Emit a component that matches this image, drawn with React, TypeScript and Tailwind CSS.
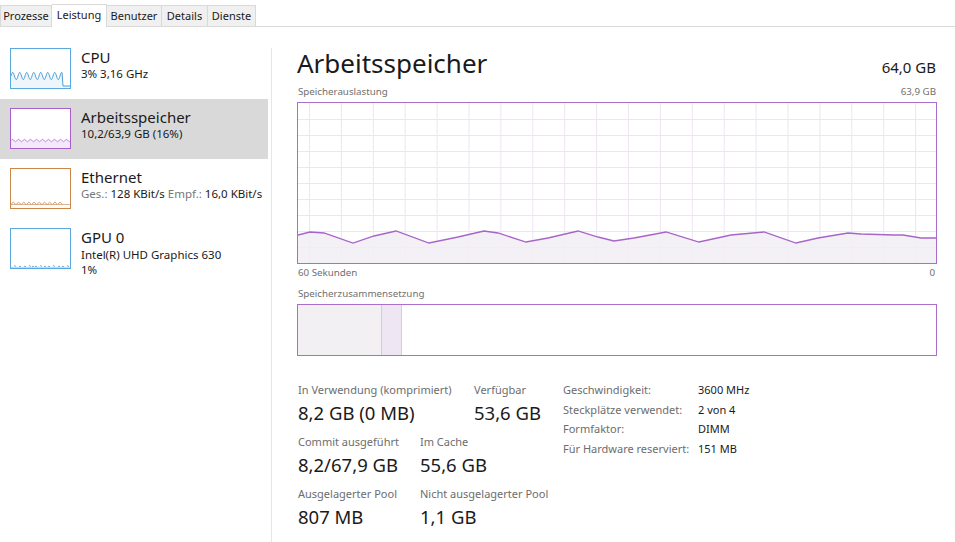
import React from "react";

const graphPts: [number, number][] = [
  [0, 132], [12, 129], [26, 130], [55, 140], [76, 133], [98, 128], [131, 140], [160, 134],
  [186, 128], [200, 130], [228, 139], [250, 135], [280, 128], [300, 134], [316, 138],
  [336, 135], [368, 129], [401, 139], [433, 132], [466, 129], [498, 140], [520, 135],
  [550, 130], [563, 131], [596, 132], [605, 132], [623, 135], [638, 135],
];

function MainGraph() {
  const W = 638;
  const H = 160;
  const v: number[] = [];
  for (let x = 11; x < W; x += 31.9) v.push(x);
  const h: number[] = [];
  for (let i = 1; i < 10; i++) h.push(i * 16);
  const line = graphPts.map((p) => `${p[0]},${p[1]}`).join(" ");
  const area = `0,${H} ${line} ${W},${H}`;
  return (
    <div className="h-[162px] border border-[#a96fca]">
      <svg width="638" height="160" viewBox="0 0 638 160" className="block">
        {v.map((x) => (
          <line key={"v" + x} x1={x + 0.5} x2={x + 0.5} y1={0} y2={H} stroke="#efe4f2" strokeWidth={1} />
        ))}
        {h.map((y) => (
          <line key={"h" + y} x1={0} x2={W} y1={y + 0.5} y2={y + 0.5} stroke="#efe4f2" strokeWidth={1} />
        ))}
        <polygon points={area} fill="#f2eef4" fillOpacity={0.85} />
        <polyline points={line} fill="none" stroke="#a765c9" strokeWidth={1.3} />
      </svg>
    </div>
  );
}

function wave(x0: number, x1: number, yc: number, amp: number, period: number) {
  const pts: string[] = [];
  for (let x = x0; x <= x1; x += 0.5) {
    pts.push(`${x},${(yc - amp * Math.sin((2 * Math.PI * (x - x0)) / period)).toFixed(2)}`);
  }
  return pts;
}

function CpuThumb() {
  const w = wave(1, 52, 28, 3.6, 7);
  const line = [...w, "53,38", "60,38"].join(" ");
  return (
    <svg width="61" height="41" viewBox="0 0 61 41" className="block">
      <polygon points={`1,40 ${line} 60,40`} fill="#eef6fc" />
      <polyline points={line} fill="none" stroke="#4c9fd7" strokeWidth={1} />
      <rect x="0.5" y="0.5" width="60" height="40" fill="none" stroke="#5aa8de" />
    </svg>
  );
}

function MemThumb() {
  const w = wave(1, 60, 32.5, 1.2, 6).join(" ");
  return (
    <svg width="61" height="41" viewBox="0 0 61 41" className="block">
      <rect x="0.5" y="0.5" width="60" height="40" fill="#ffffff" />
      <polygon points={`1,40 ${w} 60,40`} fill="#f4e9f8" />
      <polyline points={w} fill="none" stroke="#b57ad4" strokeWidth={0.9} />
      <rect x="0.5" y="0.5" width="60" height="40" fill="none" stroke="#a85fcc" />
    </svg>
  );
}

function EthThumb() {
  const arcs: string[] = [];
  for (let x = 1; x < 52; x += 5.2) {
    arcs.push(`M${x},37 Q${x + 2.3},31.5 ${x + 4.6},37`);
  }
  return (
    <svg width="61" height="41" viewBox="0 0 61 41" className="block">
      <path d={arcs.join(" ")} fill="none" stroke="#d39a66" strokeWidth={0.9} />
      <line x1="1" x2="60" y1="36.5" y2="36.5" stroke="#d8a273" strokeWidth={0.8} />
      <rect x="0.5" y="0.5" width="60" height="40" fill="none" stroke="#c9874b" />
    </svg>
  );
}

function GpuThumb() {
  const dots = [4, 9, 14, 19, 22, 25, 30, 34, 38, 43, 48, 52, 57];
  return (
    <svg width="61" height="41" viewBox="0 0 61 41" className="block">
      {dots.map((x, i) => (
        <line key={x} x1={x} x2={x + 2} y1={i % 3 === 0 ? 37.5 : 38.3} y2={38.5} stroke="#4c9fd7" strokeWidth={0.8} />
      ))}
      <line x1="1" x2="60" y1="39.3" y2="39.3" stroke="#7ab8e2" strokeWidth={0.6} />
      <rect x="0.5" y="0.5" width="60" height="40" fill="none" stroke="#5aa8de" />
    </svg>
  );
}

function Tabs() {
  const base =
    "h-[21px] flex items-center justify-center bg-[#f0f0f0] border-t border-r border-[#d9d9d9] text-[11px] text-[#1a1a1a]";
  return (
    <div className="h-[27px] flex items-end border-b border-[#d9d9d9] bg-white">
      <div className={`${base} w-[52px] border-l`}>Prozesse</div>
      <div className="h-[23px] w-[55px] -mb-px flex items-center justify-center bg-white border-t border-r border-[#d9d9d9] text-[11px] text-[#1a1a1a] pb-[1px]">
        Leistung
      </div>
      <div className={`${base} w-[55px]`}>Benutzer</div>
      <div className={`${base} w-[46px]`}>Details</div>
      <div className={`${base} w-[48px]`}>Dienste</div>
    </div>
  );
}

function SideItem({
  thumb,
  title,
  children,
  selected,
}: {
  thumb: React.ReactNode;
  title: string;
  children: React.ReactNode;
  selected?: boolean;
}) {
  return (
    <div className={`h-[60px] flex pl-[10px] pt-[9px] ${selected ? "bg-[#d9d9d9]" : ""}`}>
      <div className="w-[61px] h-[41px]">{thumb}</div>
      <div className="ml-[10px] -mt-[1px]">
        <div className="text-[15px] leading-[20px] text-[#1a1a1a]">{title}</div>
        {children}
      </div>
    </div>
  );
}

function Stat({ label, value, className }: { label: string; value: string; className?: string }) {
  return (
    <div className={className}>
      <div className="text-[11px] leading-[16px] text-[#6d6d6d] whitespace-nowrap">{label}</div>
      <div className="mt-[3px] text-[18.5px] leading-[24px] text-[#1a1a1a] whitespace-nowrap">{value}</div>
    </div>
  );
}

export default function App() {
  return (
    <div className="w-[955px] h-[542px] bg-white overflow-hidden font-['Noto_Sans',sans-serif]">
      <Tabs />
      <div className="flex h-[515px]">
        <div className="w-[268px] pt-[12px]">
          <SideItem thumb={<CpuThumb />} title="CPU">
            <div className="text-[11.5px] leading-[16px] -mt-[1px] text-[#1a1a1a]">3% 3,16 GHz</div>
          </SideItem>
          <SideItem thumb={<MemThumb />} title="Arbeitsspeicher" selected>
            <div className="text-[11.5px] leading-[16px] -mt-[1px] text-[#1a1a1a]">10,2/63,9 GB (16%)</div>
          </SideItem>
          <SideItem thumb={<EthThumb />} title="Ethernet">
            <div className="text-[11.5px] leading-[16px] -mt-[1px] text-[#1a1a1a] whitespace-nowrap">
              <span className="text-[#777777]">Ges.:</span> 128 KBit/s{" "}
              <span className="text-[#777777]">Empf.:</span> 16,0 KBit/s
            </div>
          </SideItem>
          <SideItem thumb={<GpuThumb />} title="GPU 0">
            <div className="text-[11.5px] leading-[15px] text-[#1a1a1a]">Intel(R) UHD Graphics 630</div>
            <div className="text-[11.5px] leading-[15px] text-[#1a1a1a]">1%</div>
          </SideItem>
        </div>
        <div className="ml-[3px] mt-[21px] w-px h-[494px] bg-[#e6e6e6]" />
        <div className="ml-[25px] w-[640px] pt-[18px]">
          <div className="h-[36px] flex items-baseline justify-between">
            <div className="text-[26px] leading-[36px] text-[#1a1a1a]">Arbeitsspeicher</div>
            <div className="text-[15px] leading-[20px] text-[#1a1a1a] pr-[1px]">64,0 GB</div>
          </div>
          <div className="mt-[4px] h-[14px] flex justify-between text-[9.75px] leading-[14px] text-[#707070] px-[1px]">
            <span>Speicherauslastung</span>
            <span>63,9 GB</span>
          </div>
          <div className="mt-[3px]">
            <MainGraph />
          </div>
          <div className="mt-[2px] h-[14px] flex justify-between text-[9.75px] leading-[14px] text-[#707070] px-[1px]">
            <span>60 Sekunden</span>
            <span className="pr-[1px]">0</span>
          </div>
          <div className="mt-[7px] h-[14px] text-[9.75px] leading-[14px] text-[#707070] px-[1px]">
            Speicherzusammensetzung
          </div>
          <div className="mt-[3px] h-[52px] border border-[#a96fca] flex">
            <div className="w-[83px] bg-[#f2f0f3]" />
            <div className="w-[21px] bg-[#efe6f3] border-l border-r border-[#dcc6e6]" />
            <div className="flex-1 bg-white" />
          </div>
          <div className="mt-[26px] flex">
            <div className="w-[266px] pl-[1px]">
              <div className="flex">
                <Stat className="w-[176px]" label="In Verwendung (komprimiert)" value="8,2 GB (0 MB)" />
                <Stat label="Verfügbar" value="53,6 GB" />
              </div>
              <div className="flex mt-[9px]">
                <Stat className="w-[122px]" label="Commit ausgeführt" value="8,2/67,9 GB" />
                <Stat label="Im Cache" value="55,6 GB" />
              </div>
              <div className="flex mt-[9px]">
                <Stat className="w-[122px]" label="Ausgelagerter Pool" value="807 MB" />
                <Stat label="Nicht ausgelagerter Pool" value="1,1 GB" />
              </div>
            </div>
            <div className="-mt-[2px] text-[11px] leading-[19.5px]">
              {[
                ["Geschwindigkeit:", "3600 MHz"],
                ["Steckplätze verwendet:", "2 von 4"],
                ["Formfaktor:", "DIMM"],
                ["Für Hardware reserviert:", "151 MB"],
              ].map(([k, val]) => (
                <div key={k} className="flex">
                  <div className="w-[135px] text-[#6d6d6d] whitespace-nowrap">{k}</div>
                  <div className="text-[#1a1a1a] whitespace-nowrap">{val}</div>
                </div>
              ))}
            </div>
          </div>
        </div>
      </div>
    </div>
  );
}
